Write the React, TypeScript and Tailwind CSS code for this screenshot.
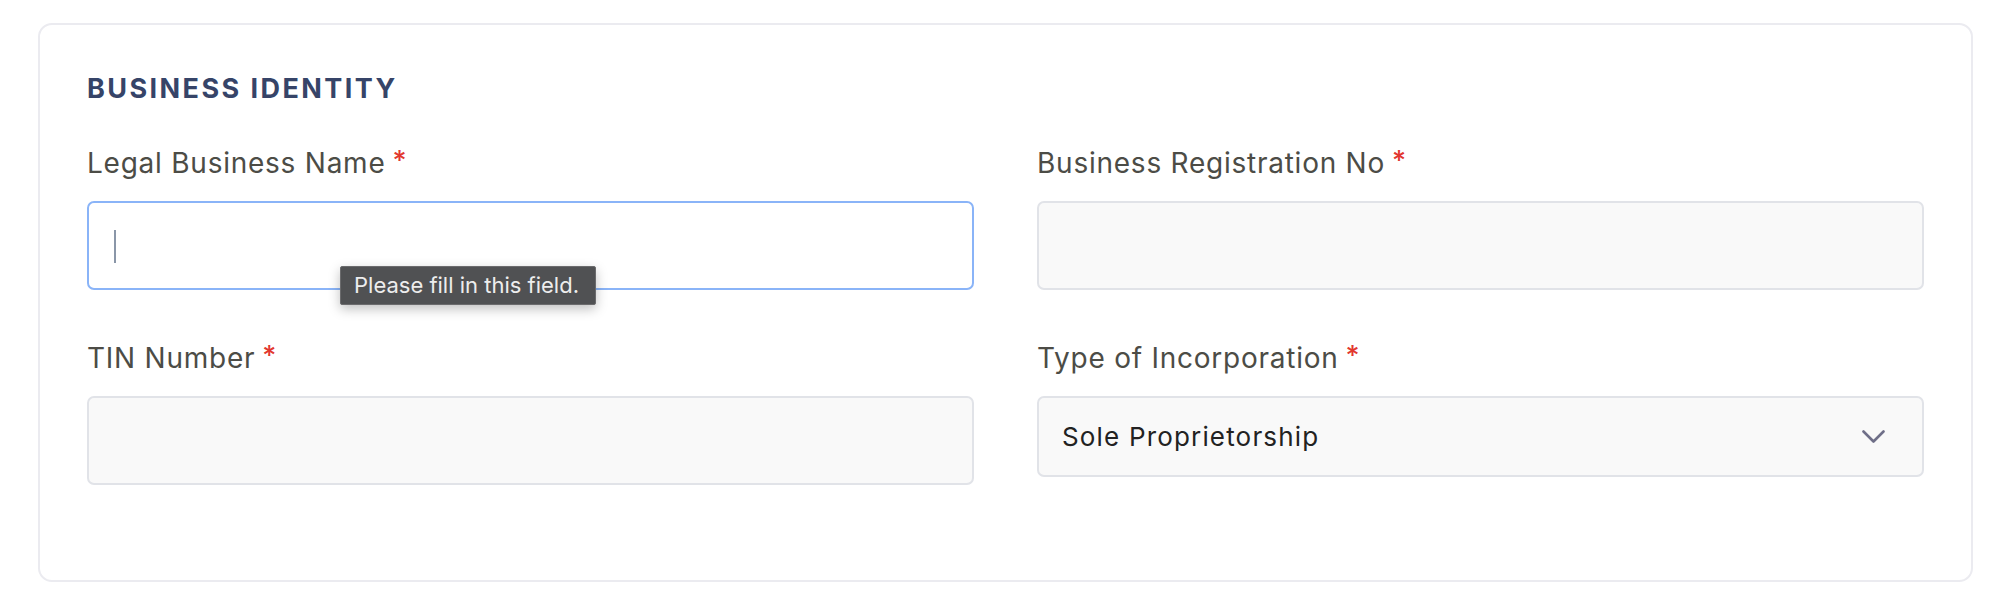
import React from "react";

const font = { fontFamily: "Inter, 'Noto Sans', sans-serif" };

function Label({ text }: { text: string }) {
  return (
    <div className="h-[36px] leading-[36px] text-[28px] tracking-[0.027em] text-[#4c4c46] whitespace-nowrap" style={font}>
      {text}
      <span className="relative -top-[3px] ml-[7px] text-[27px] font-medium text-[#e2372f]">*</span>
    </div>
  );
}

function Chevron() {
  return (
    <svg width="23" height="14" viewBox="0 0 23 14" fill="none">
      <path d="M1.5 1.5 L11.5 11.5 L21.5 1.5" stroke="#6f6f88" strokeWidth="2.6" strokeLinecap="round" strokeLinejoin="round" />
    </svg>
  );
}

export default function App() {
  return (
    <div className="min-h-screen bg-white pt-[23px] pl-[38px] pr-[41px]" style={font}>
      <div className="rounded-[14px] border-2 border-[#ebebf0] pt-[48px] px-[47px] pb-[95px]">
        <h2 className="text-[27px] leading-[32px] font-bold text-[#364468] tracking-[0.09em]" style={font}>
          BUSINESS IDENTITY
        </h2>
        <div className="mt-[40px] grid grid-cols-2 gap-x-[63px] gap-y-[50px] items-start">
          <div>
            <Label text="Legal Business Name" />
            <div className="relative mt-[20px] h-[89px] rounded-[7px] border-2 border-[#8ab4f8] bg-white">
              <div className="absolute left-[25px] top-[27px] h-[33px] w-[2px] bg-[#8a96a8]" />
              <div className="absolute left-[251px] top-[63px] z-10 h-[39px] w-[256px] rounded-[2px] border border-[#6b6b6d] bg-[#505153] px-[13px] text-[22px] leading-[37px] text-[#ededed] shadow-[0_4px_12px_rgba(0,0,0,0.25)] whitespace-nowrap">
                Please fill in this field.
              </div>
            </div>
          </div>
          <div>
            <Label text="Business Registration No" />
            <div className="mt-[20px] h-[89px] rounded-[7px] border-2 border-[#e1e3e8] bg-[#f9f9f9]" />
          </div>
          <div>
            <Label text="TIN Number" />
            <div className="mt-[20px] h-[89px] rounded-[7px] border-2 border-[#e1e3e8] bg-[#f9f9f9]" />
          </div>
          <div>
            <Label text="Type of Incorporation" />
            <div className="mt-[20px] flex h-[81px] items-center justify-between rounded-[7px] border-2 border-[#e1e3e8] bg-[#f9f9f9] pl-[23px] pr-[37px]">
              <span className="text-[26px] tracking-[0.045em] text-[#222222]">Sole Proprietorship</span>
              <Chevron />
            </div>
          </div>
        </div>
      </div>
    </div>
  );
}
